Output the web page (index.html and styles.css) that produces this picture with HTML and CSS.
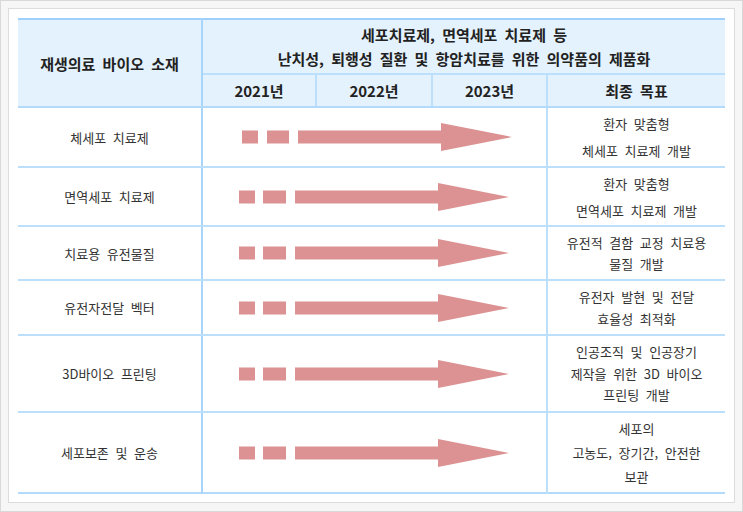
FILE: index.html
```html
<!DOCTYPE html>
<html lang="ko">
<head>
<meta charset="utf-8">
<title>재생의료 바이오 소재</title>
<link rel="stylesheet" href="styles.css">
</head>
<body>
<div class="page">
  <div class="frame">
    <table class="plan">
      <colgroup>
        <col class="c-name"><col class="c-y1"><col class="c-y2"><col class="c-y3"><col class="c-goal">
      </colgroup>
      <thead>
        <tr class="h1">
          <th rowspan="2" class="name-h">재생의료 바이오 소재</th>
          <th colspan="4" class="title">세포치료제, 면역세포 치료제 등<br>난치성, 퇴행성 질환 및 항암치료를 위한 의약품의 제품화</th>
        </tr>
        <tr class="h2">
          <th class="year">2021년</th>
          <th class="year">2022년</th>
          <th class="year">2023년</th>
          <th class="year goal-h">최종 목표</th>
        </tr>
      </thead>
      <tbody>
        <tr class="r1">
          <td class="name">체세포 치료제</td>
          <td colspan="3" class="arrow-cell">
            <svg class="arrow first" width="345" height="28" viewBox="0 0 345 28"><rect x="39" y="7.5" width="16" height="13"/><rect x="64" y="7.5" width="22" height="13"/><polygon points="95,7.5 238,7.5 238,0 309,14 238,28 238,20.5 95,20.5"/></svg>
          </td>
          <td class="goal wide"><p>환자 맞춤형</p><p>체세포 치료제 개발</p></td>
        </tr>
        <tr class="r2">
          <td class="name">면역세포 치료제</td>
          <td colspan="3" class="arrow-cell">
            <svg class="arrow" width="345" height="28" viewBox="0 0 345 28"><rect x="36" y="7.5" width="16" height="13"/><rect x="60" y="7.5" width="23" height="13"/><polygon points="92,7.5 235,7.5 235,0 306,14 235,28 235,20.5 92,20.5"/></svg>
          </td>
          <td class="goal wide"><p>환자 맞춤형</p><p>면역세포 치료제 개발</p></td>
        </tr>
        <tr class="r3">
          <td class="name">치료용 유전물질</td>
          <td colspan="3" class="arrow-cell">
            <svg class="arrow" width="345" height="28" viewBox="0 0 345 28"><rect x="36" y="7.5" width="16" height="13"/><rect x="60" y="7.5" width="23" height="13"/><polygon points="92,7.5 235,7.5 235,0 306,14 235,28 235,20.5 92,20.5"/></svg>
          </td>
          <td class="goal">유전적 결함 교정 치료용<br>물질 개발</td>
        </tr>
        <tr class="r4">
          <td class="name">유전자전달 벡터</td>
          <td colspan="3" class="arrow-cell">
            <svg class="arrow" width="345" height="28" viewBox="0 0 345 28"><rect x="36" y="7.5" width="16" height="13"/><rect x="60" y="7.5" width="23" height="13"/><polygon points="92,7.5 235,7.5 235,0 306,14 235,28 235,20.5 92,20.5"/></svg>
          </td>
          <td class="goal">유전자 발현 및 전달<br>효율성 최적화</td>
        </tr>
        <tr class="r5">
          <td class="name">3D바이오 프린팅</td>
          <td colspan="3" class="arrow-cell">
            <svg class="arrow" width="345" height="28" viewBox="0 0 345 28"><rect x="36" y="7.5" width="16" height="13"/><rect x="60" y="7.5" width="23" height="13"/><polygon points="92,7.5 235,7.5 235,0 306,14 235,28 235,20.5 92,20.5"/></svg>
          </td>
          <td class="goal">인공조직 및 인공장기<br>제작을 위한 3D 바이오<br>프린팅 개발</td>
        </tr>
        <tr class="r6">
          <td class="name">세포보존 및 운송</td>
          <td colspan="3" class="arrow-cell">
            <svg class="arrow" width="345" height="28" viewBox="0 0 345 28"><rect x="36" y="7.5" width="16" height="13"/><rect x="60" y="7.5" width="23" height="13"/><polygon points="92,7.5 235,7.5 235,0 306,14 235,28 235,20.5 92,20.5"/></svg>
          </td>
          <td class="goal mid">세포의<br>고농도, 장기간, 안전한<br>보관</td>
        </tr>
      </tbody>
    </table>
  </div>
</div>
</body>
</html>
```

FILE: styles.css
```css
html, body {
  margin: 0;
  padding: 0;
  background: #ffffff;
}

.page {
  box-sizing: border-box;
  width: 743px;
  height: 512px;
  border: 1px solid #d8d8d8;
  background: #f6f6f6;
  padding: 7px;
}

.frame {
  box-sizing: border-box;
  height: 495px;
  border: 1px solid #dcdcdc;
  background: #ffffff;
  padding: 9px 8px 8px 9px;
  font-family: "Noto Sans CJK KR", "Noto Sans", sans-serif;
}

.plan {
  width: 707px;
  table-layout: fixed;
  border-collapse: collapse;
  border-top: 2px solid #9fd0fb;
  border-bottom: 2px solid #b3dafb;
}

.c-name { width: 184px; }
.c-y1 { width: 114px; }
.c-y2 { width: 116px; }
.c-y3 { width: 115px; }
.c-goal { width: 178px; }

th, td {
  padding: 0;
  text-align: center;
  vertical-align: middle;
}

thead th {
  background: #e4f2fd;
  color: #222;
  font-size: 15px;
  font-weight: 700;
  word-spacing: 3px;
}

.name-h {
  border-right: 2px solid #a9d5fb;
  border-bottom: 2px solid #b3dafb;
}

.h1 { height: 55px; }
.h2 { height: 33px; }

.title {
  line-height: 24px;
  border-bottom: 2px solid #bcdffb;
}

.year {
  border-right: 2px solid #bcdffb;
  border-bottom: 2px solid #b3dafb;
}

.goal-h {
  border-right: none;
}

tbody td {
  font-size: 13px;
  color: #333;
  word-spacing: 3px;
  border-bottom: 2px solid #bcdffb;
}

tbody .name {
  border-right: 2px solid #a9d5fb;
}

.arrow-cell {
  border-right: 2px solid #bcdffb;
}

.arrow {
  display: block;
  fill: #dc9292;
}

.goal {
  line-height: 21.5px;
}

.goal p {
  margin: 0;
}

.goal.wide {
  line-height: 27px;
}

.goal.mid {
  line-height: 24px;
}

.r1 { height: 60px; }
.r2 { height: 59px; }
.r3 { height: 54px; }
.r4 { height: 55px; }
.r5 { height: 77px; }
.r6 { height: 81px; }

tbody .r6 td {
  border-bottom: none;
}
```
